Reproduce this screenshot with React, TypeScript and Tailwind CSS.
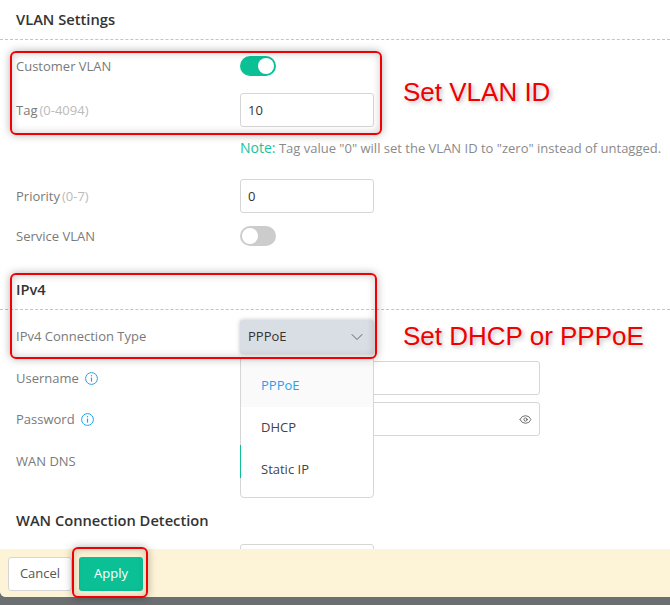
import { Eye, ChevronDown } from "lucide-react";

const Info = () => (
  <svg width="13" height="13" viewBox="0 0 13 13" fill="none" stroke="#1fa4ea" strokeWidth="1" className="shrink-0">
    <circle cx="6.5" cy="6.5" r="5.9" />
    <path d="M6.5 5.6v4" strokeWidth="1.2" />
    <circle cx="6.5" cy="3.7" r="0.7" fill="#1fa4ea" stroke="none" />
  </svg>
);

const Toggle = ({ on }: { on: boolean }) => (
  <div className={`flex h-5 w-9 items-center rounded-full px-[2px] ${on ? "justify-end bg-[#0cc096]" : "justify-start bg-[#cccccc]"}`}>
    <div className="h-4 w-4 rounded-full bg-white" />
  </div>
);

const Label = ({ children, flush }: { children: React.ReactNode; flush?: boolean }) => (
  <div className={`flex w-[224px] shrink-0 items-center gap-[6px] text-[13px] text-[#7a7a7a] ${flush ? "" : "pt-[1px]"}`}>{children}</div>
);

const Input = ({ value, wide }: { value?: string; wide?: boolean }) => (
  <div className={`flex h-[34px] items-center rounded-[3px] border border-[#d6d6d6] bg-white pt-[1px] pl-[7px] text-[13px] text-[#333] ${wide ? "w-[300px]" : "w-[134px]"}`}>
    {value}
  </div>
);

const Box = ({ className }: { className: string }) => (
  <div className={`pointer-events-none absolute rounded-[6px] border-2 border-[#f00000] shadow-[0_0_8px_rgba(0,0,0,0.3),inset_0_0_8px_rgba(0,0,0,0.2)] ${className}`} />
);

export default function App() {
  return (
    <div className="relative flex h-[605px] w-[670px] flex-col overflow-hidden bg-[#6c6f71] font-['Open_Sans','Noto_Sans',sans-serif]">
      <div className="flex h-[597px] flex-col overflow-hidden rounded-bl-[6px] bg-white">
        <div className="flex-1 overflow-hidden">
          <div className="flex h-[40px] items-center border-b border-dashed border-[#c4c4c4] pl-4 text-[14.7px] font-semibold text-[#333]">
            VLAN Settings
          </div>
          <div className="mt-4 flex h-5 items-center pl-4">
            <Label>Customer VLAN</Label>
            <Toggle on />
          </div>
          <div className="mt-[17px] flex items-center pl-4">
            <Label>
              <span>
                Tag<span className="ml-[2px] text-[#bbbbbb]">(0-4094)</span>
              </span>
            </Label>
            <Input value="10" />
          </div>
          <div className="mt-[12px] pl-[240px] text-[13px] leading-[18px] whitespace-nowrap text-[#8a8a8a]">
            <span className="text-[14px] font-medium text-[#19c39b]">Note:</span> Tag value "0" will set the VLAN ID to "zero" instead of untagged.
          </div>
          <div className="mt-[22px] flex items-center pl-4">
            <Label>
              <span>
                Priority<span className="ml-[2px] text-[#bbbbbb]">(0-7)</span>
              </span>
            </Label>
            <Input value="0" />
          </div>
          <div className="mt-[13px] flex h-5 items-center pl-4">
            <Label>Service VLAN</Label>
            <Toggle on={false} />
          </div>
          <div className="mt-[24px] flex h-[40px] items-center border-b border-dashed border-[#c4c4c4] pl-4 text-[14.7px] font-semibold text-[#333]">
            IPv4
          </div>
          <div className="mt-[10px] flex items-center pl-4">
            <Label flush>IPv4 Connection Type</Label>
            <div className="flex h-[34px] w-[134px] items-center justify-between rounded-[3px] bg-[#d9dee4] pr-[7px] pl-[8px] text-[13px] text-[#333] shadow-[0_0_4px_rgba(0,0,0,0.25)]">
              PPPoE
              <ChevronDown size={20} strokeWidth={1.1} color="#555" />
            </div>
          </div>
          <div className="mt-[7px] flex items-center pl-4">
            <Label>
              Username <Info />
            </Label>
            <Input wide />
          </div>
          <div className="mt-[7px] flex items-center pl-4">
            <Label>
              Password <Info />
            </Label>
            <div className="flex h-[34px] w-[300px] items-center justify-end rounded-[3px] border border-[#d6d6d6] bg-white pr-[7px]">
              <Eye size={13} strokeWidth={1.4} color="#444" />
            </div>
          </div>
          <div className="mt-[9px] flex h-[34px] items-center pl-4">
            <Label flush>WAN DNS</Label>
            <div className="h-[34px] w-9 rounded-l-[3px] bg-[#0cc096]" />
          </div>
          <div className="mt-[31px] flex h-[20px] items-center pl-4 text-[14.7px] font-semibold text-[#333]">
            WAN Connection Detection
          </div>
          <div className="mt-[14px] pl-[240px]">
            <Input />
          </div>
        </div>
        <div className="flex h-[48px] shrink-0 items-start gap-[7px] bg-[#fdf3d7] pt-2 pl-2">
          <button className="h-[34px] w-[64px] rounded-[3px] border border-[#d6d6d6] bg-white text-[13px] text-[#555]">Cancel</button>
          <button className="h-[34px] w-[64px] rounded-[3px] bg-[#0cc096] text-[13px] font-medium text-white">Apply</button>
        </div>
      </div>

      <div className="absolute top-[357px] left-[240px] flex h-[141px] w-[134px] flex-col rounded-b-[4px] border border-[#d6d6d6] bg-white pt-[6px] text-[13px] text-[#444]">
        <div className="flex h-[43px] items-center bg-[#fafafa] pl-5 text-[#1fa4ea]">PPPoE</div>
        <div className="flex h-[42px] items-center pl-5">DHCP</div>
        <div className="flex h-[42px] items-center pl-5">Static IP</div>
      </div>
      <div className="absolute top-[445px] left-[240px] h-[33px] w-[1px] bg-[#0cc096]" />

      <Box className="top-[51px] left-[10px] h-[84px] w-[372px]" />
      <Box className="top-[273px] left-[10px] h-[86px] w-[367px]" />
      <Box className="top-[547px] left-[72px] h-[51px] w-[76px]" />
      <div className="absolute top-[77px] left-[403px] font-['Liberation_Sans',sans-serif] text-[26px] leading-[30px] text-[#f00000] [text-shadow:2px_2px_4px_rgba(0,0,0,0.25)]">Set VLAN ID</div>
      <div className="absolute top-[321px] left-[403px] font-['Liberation_Sans',sans-serif] text-[26px] leading-[30px] whitespace-nowrap text-[#f00000] [text-shadow:2px_2px_4px_rgba(0,0,0,0.25)]">Set DHCP or PPPoE</div>
    </div>
  );
}
